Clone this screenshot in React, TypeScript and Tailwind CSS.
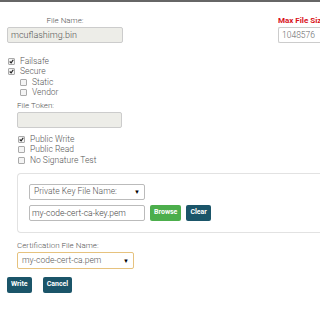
import React from 'react';

const Check = ({ checked, label }: { checked?: boolean; label: string }) => (
  <label className="flex items-center h-[10.5px] text-[8.5px] text-[#555] font-light">
    <span className="w-[7px] h-[7px] border border-[#aaa] rounded-[1px] bg-[#f4f4f4] mr-[5px] flex items-center justify-center">
      {checked && (
        <svg width="7" height="7" viewBox="0 0 7 7">
          <path d="M1 3.5 L3 5.5 L6 1" stroke="#222" strokeWidth="1.6" fill="none" />
        </svg>
      )}
    </span>
    {label}
  </label>
);

const Btn = ({ label, green }: { label: string; green?: boolean }) => (
  <button
    className={`h-[16px] px-[4px] rounded-[2px] text-[7px] font-bold text-white ${
      green ? 'bg-[#4cae4c]' : 'bg-[#1b5569]'
    }`}
  >
    {label}
  </button>
);

export default function App() {
  return (
    <div
      className="w-[320px] h-[312px] bg-white overflow-hidden border-t-2 border-[#666] font-light"
      style={{ fontFamily: 'Roboto, "Open Sans", sans-serif' }}
    >
      <div className="flex pt-[13px]">
        <div className="ml-[7px] w-[116px]">
          <div className="text-center text-[8px] text-[#555] h-[12px] leading-[12px]">File Name:</div>
          <div className="h-[16px] bg-[#edede8] border border-[#ccc] rounded-[2px] text-[9px] text-[#555] px-[3px] leading-[14px]">
            mcuflashimg.bin
          </div>
        </div>
        <div className="ml-auto w-[42px] overflow-hidden">
          <div className="text-[8px] font-bold text-[#d9131b] h-[12px] leading-[12px] whitespace-nowrap">Max File Size</div>
          <div className="h-[16px] bg-white border border-[#ccc] rounded-l-[2px] border-r-0 text-[8.5px] text-[#666] px-[3px] leading-[14px]">
            1048576
          </div>
        </div>
      </div>

      <div className="ml-[8px] mt-[13px]">
        <Check checked label="Failsafe" />
        <Check checked label="Secure" />
        <div className="ml-[12px]">
          <Check label="Static" />
          <Check label="Vendor" />
        </div>
      </div>

      <div className="ml-[17px] mt-[2px]">
        <div className="text-[8px] text-[#555] h-[12px] leading-[12px]">File Token:</div>
        <div className="w-[105px] h-[16px] bg-[#edede8] border border-[#ccc] rounded-[2px]" />
        <div className="mt-[6px] ml-[1px]">
          <Check checked label="Public Write" />
          <Check label="Public Read" />
          <Check label="No Signature Test" />
        </div>
      </div>

      <div className="ml-[17px] mt-[7px] h-[60px] border border-r-0 border-[#e2e2e2] rounded-l-[4px] pl-[11px] pt-[10px]">
        <div className="w-[116px] h-[16px] border border-[#bbb] rounded-[2px] flex items-center px-[4px] text-[8.5px] text-[#555]">
          Private Key File Name:
          <span className="ml-auto text-[6px] text-black">▼</span>
        </div>
        <div className="flex items-center mt-[5px] gap-[5px]">
          <div className="w-[116px] h-[16px] border border-[#bbb] rounded-[2px] px-[2px] text-[8.5px] text-[#444] leading-[14px]">
            my-code-cert-ca-key.pem
          </div>
          <Btn label="Browse" green />
          <Btn label="Clear" />
        </div>
      </div>

      <div className="ml-[17px] mt-[7px]">
        <div className="text-[8px] text-[#555] h-[12px] leading-[12px]">Certification File Name:</div>
        <div className="w-[117px] h-[17px] border border-[#e6c27e] rounded-[2px] flex items-center px-[4px] text-[8.5px] text-[#555]">
          my-code-cert-ca.pem
          <span className="ml-auto text-[6px] text-black">▼</span>
        </div>
      </div>

      <div className="flex gap-[11px] ml-[7px] mt-[8px]">
        <Btn label="Write" />
        <Btn label="Cancel" />
      </div>
    </div>
  );
}
